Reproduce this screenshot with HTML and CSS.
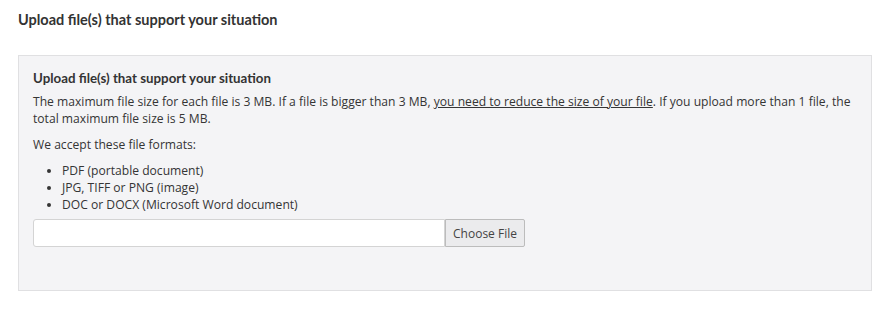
FILE: index.html
```html
<!DOCTYPE html>
<html lang="en">
  <head>
    <meta charset="UTF-8" />
    <meta name="viewport" content="width=device-width, initial-scale=1.0" />
    <title>Upload files</title>
    <link rel="stylesheet" href="styles.css">
  </head>
  <body>
    <div class="page">
      <h2 class="section-title">Upload file(s) that support your situation</h2>
      <div class="upload-panel">
        <h3 class="panel-title">Upload file(s) that support your situation</h3>
        <p class="hint">
          The maximum file size for each file is 3 MB. If a file is bigger than 3 MB,
          <a href="#">you need to reduce the size of your file</a>. If you upload more than 1 file, the
          total maximum file size is 5 MB.
        </p>
        <p class="hint">We accept these file formats:</p>
        <ul class="formats">
          <li>PDF (portable document)</li>
          <li>JPG, TIFF or PNG (image)</li>
          <li>DOC or DOCX (Microsoft Word document)</li>
        </ul>
        <div class="file-row">
          <input type="text" class="file-name" readonly />
          <button type="button" class="choose-btn">Choose File</button>
        </div>
      </div>
    </div>
  </body>
</html>
```

FILE: styles.css
```css
body {
  margin: 0;
  background: #fff;
  font-family: "Open Sans", Arial, sans-serif;
  color: #353535;
}

.page {
  padding: 11px 12px 0 18px;
}

.section-title {
  font-family: Lato, Arial, sans-serif;
  font-size: 14.5px;
  font-weight: bold;
  color: #333;
  margin: 0 0 26px;
  line-height: 18px;
}

.upload-panel {
  background: #f4f4f6;
  border: 1px solid #e0e0e2;
  padding: 13px 14px 43px;
}

.panel-title {
  font-family: Lato, Arial, sans-serif;
  font-size: 13.3px;
  font-weight: bold;
  color: #333;
  margin: 0 0 6px;
  line-height: 18px;
}

.hint {
  font-size: 12.12px;
  line-height: 17px;
  margin: 0 0 9px;
}

.hint a {
  color: #353535;
  text-decoration: underline;
}

.formats {
  font-size: 12.12px;
  line-height: 17px;
  margin: 1px 0 6px;
  padding-left: 29px;
}

.file-row {
  display: flex;
}

.file-name {
  width: 412px;
  height: 28px;
  box-sizing: border-box;
  border: 1px solid #d4d4d4;
  border-radius: 3px 0 0 3px;
  background: #fff;
}

.choose-btn {
  height: 28px;
  width: 80px;
  box-sizing: border-box;
  border: 1px solid #bcbcbc;
  border-radius: 0 2px 2px 0;
  background: #ebebed;
  font-family: "Open Sans", Arial, sans-serif;
  font-size: 12px;
  color: #444;
  cursor: pointer;
}
```
